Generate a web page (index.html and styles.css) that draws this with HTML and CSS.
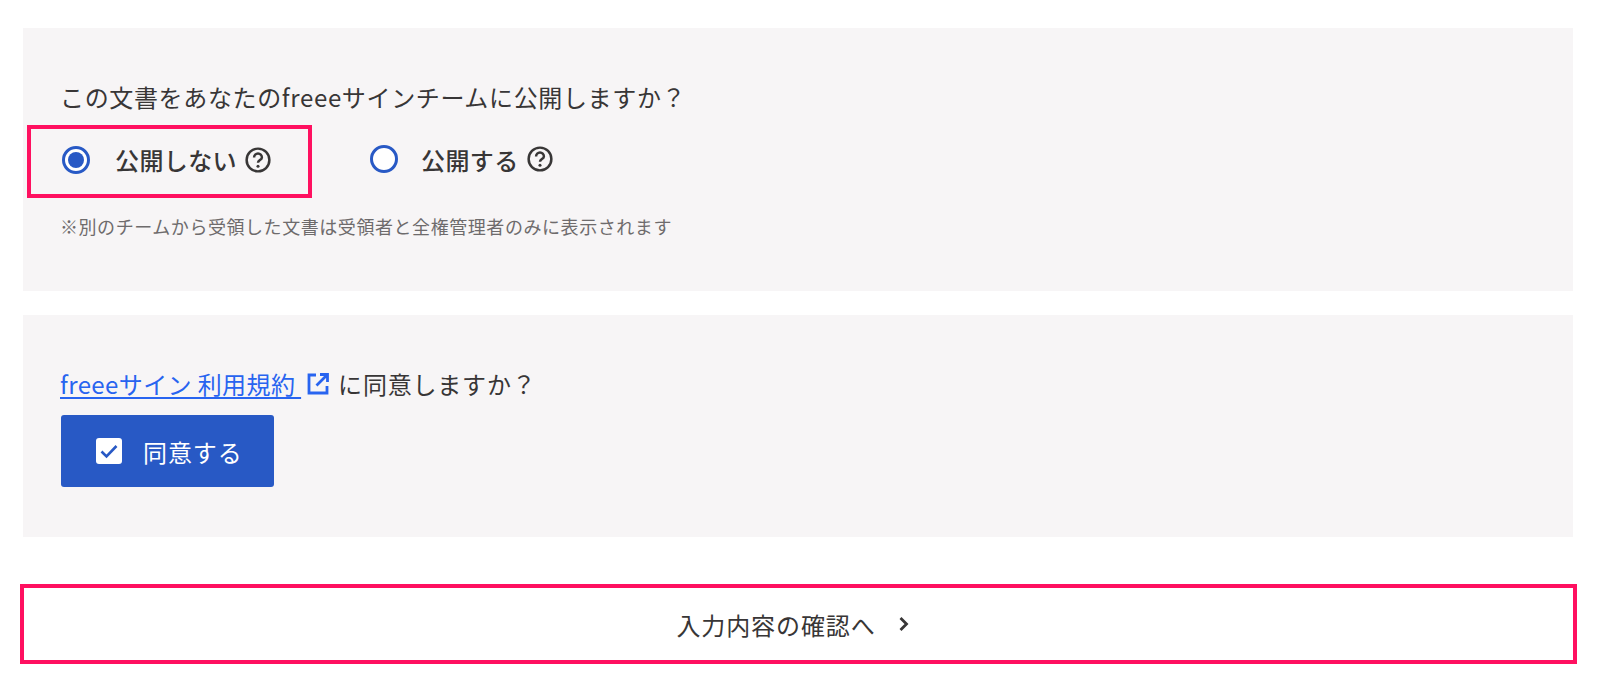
FILE: index.html
```html
<!DOCTYPE html>
<html lang="ja">
<head>
<meta charset="utf-8">
<title>freeeサイン</title>
<link rel="stylesheet" href="styles.css">
</head>
<body>
<main class="page">
  <section class="panel panel-publish">
    <p class="question">この文書をあなたのfreeeサインチームに公開しますか？</p>
    <div class="radios">
      <label class="radio radio-marked">
        <span class="dot dot-on"></span>
        <span class="radio-label">公開しない</span>
        <svg class="help" viewBox="0 0 24 24" aria-hidden="true"><circle cx="12" cy="12" r="10.5" fill="none" stroke="currentColor" stroke-width="2.3"/><path d="M8.4 9.6a3.6 3.6 0 0 1 7.2 0c0 2.4-3.6 2.6-3.6 5" fill="none" stroke="currentColor" stroke-width="2.3"/><circle cx="12" cy="17.8" r="1.4" fill="currentColor"/></svg>
      </label>
      <label class="radio radio-plain">
        <span class="dot"></span>
        <span class="radio-label">公開する</span>
        <svg class="help" viewBox="0 0 24 24" aria-hidden="true"><circle cx="12" cy="12" r="10.5" fill="none" stroke="currentColor" stroke-width="2.3"/><path d="M8.4 9.6a3.6 3.6 0 0 1 7.2 0c0 2.4-3.6 2.6-3.6 5" fill="none" stroke="currentColor" stroke-width="2.3"/><circle cx="12" cy="17.8" r="1.4" fill="currentColor"/></svg>
      </label>
    </div>
    <p class="note">※別のチームから受領した文書は受領者と全権管理者のみに表示されます</p>
  </section>
  <section class="panel panel-terms">
    <p class="question terms-line"><a class="link" href="#">freeeサイン 利用規約 </a><svg class="ext" viewBox="0 0 24 24" aria-hidden="true"><path d="M10 3H3v18h18v-7M14 2.5h7.5V10M21 3L10.5 13.5" fill="none" stroke="currentColor" stroke-width="2.8"/></svg><span class="terms-tail">に同意しますか？</span></p>
    <button class="agree" type="button">
      <svg class="check" viewBox="0 0 26 26" aria-hidden="true"><rect width="26" height="26" rx="3" fill="#fff"/><path d="M5.5 13.5l5 5 10-10.5" fill="none" stroke="#2859c5" stroke-width="2.6"/></svg>
      <span>同意する</span>
    </button>
  </section>
  <button class="next" type="button">
    <span class="next-label">入力内容の確認へ</span>
    <svg class="chev" viewBox="0 0 12 16" aria-hidden="true"><path d="M2.5 2l6 6-6 6" fill="none" stroke="currentColor" stroke-width="2.8"/></svg>
  </button>
</main>
</body>
</html>
```
FILE: styles.css
```css
* { box-sizing: border-box; }
html, body { margin: 0; background: #fff; }
body {
  font-family: "Noto Sans CJK JP", "Noto Sans", sans-serif;
  color: #383636;
}
.page {
  display: flex;
  flex-direction: column;
  padding: 28px 23px 0 20px;
  height: 698px;
  overflow: hidden;
}
p { margin: 0; }
.panel {
  background: #f7f5f6;
  margin: 0 4px 0 3px;
  padding: 0 37px 0 38px;
}
.panel-publish { height: 263px; padding-top: 52px; }
.panel-terms { height: 222px; margin-top: 24px; padding-top: 52px; }
.question {
  font-size: 24px;
  line-height: 34px;
  letter-spacing: 0.65px;
  margin-left: -1px;
}
.radios {
  display: flex;
  margin: 11px 0 0 -34px;
  height: 73px;
}
.radio {
  display: flex;
  align-items: center;
  height: 73px;
  font-size: 24px;
  font-weight: 500;
}
.radio-marked {
  width: 285px;
  border: 4px solid #ff1060;
  padding: 0 0 4px 31px;
}
.radio-plain { margin-left: 58px; padding-bottom: 5px; }
.dot {
  width: 28px;
  height: 28px;
  border: 3px solid #2859c5;
  border-radius: 50%;
  background: #fff;
  flex: none;
  display: flex;
  align-items: center;
  justify-content: center;
}
.dot-on::after {
  content: "";
  width: 16px;
  height: 16px;
  border-radius: 50%;
  background: #2859c5;
}
.radio-label { margin-left: 25px; letter-spacing: 0.4px; }
.radio-plain .radio-label { margin-left: 23px; }
.help { width: 26px; height: 26px; margin-left: 8px; flex: none; }
.note {
  margin-top: 15px;
  margin-left: -1px;
  font-size: 18px;
  line-height: 27px;
  letter-spacing: 0.56px;
  color: #6e6b6c;
}
.terms-line { display: flex; align-items: center; white-space: pre; }
.link { color: #2864f0; text-decoration: underline; text-underline-offset: 3px; letter-spacing: 0.4px; }
.ext { width: 24px; height: 24px; color: #2864f0; margin: 0 8px 0 5px; flex: none; }
.terms-tail { letter-spacing: 0.8px; }
.agree {
  display: flex;
  align-items: center;
  width: 213px;
  height: 72px;
  margin: 14px 0 0;
  padding: 0 0 0 35px;
  background: #2859c5;
  border: 0;
  border-radius: 3px;
  color: #fff;
  font: inherit;
  font-size: 24px;
  letter-spacing: 0.9px;
}
.check { width: 26px; height: 26px; margin-right: 21px; flex: none; }
.next {
  display: flex;
  align-items: center;
  justify-content: center;
  height: 80px;
  margin-top: 47px;
  background: #fff;
  border: 4px solid #ff1060;
  color: #383636;
  font: inherit;
  font-size: 24px;
  padding: 0 11px 0 0;
}
.next-label { letter-spacing: 0.9px; }
.chev { width: 12px; height: 16px; margin-left: 22px; }
```
